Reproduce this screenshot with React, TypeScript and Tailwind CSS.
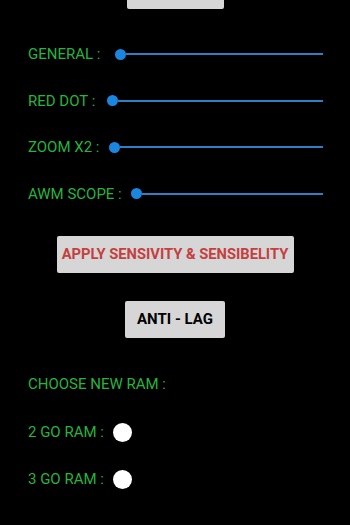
import React from 'react';

const sliders = [
  { label: 'GENERAL :', gap: 'ml-[15px]' },
  { label: 'RED DOT :', gap: 'ml-[12px]' },
  { label: 'ZOOM X2 :', gap: 'ml-[10px]' },
  { label: 'AWM SCOPE :', gap: 'ml-[9px]' },
];

const Slider: React.FC<{ label: string; gap: string }> = ({ label, gap }) => (
  <div className="flex items-center h-[46.5px] pl-[28px] pr-[27px]">
    <span className="text-[15px] text-[#26b43f] whitespace-nowrap">{label}</span>
    <div className={`flex-1 h-[12px] flex items-center ${gap}`}>
      <div className="w-[11px] h-[11px] rounded-full bg-[#1a86e0] shrink-0" />
      <div className="flex-1 h-[2px] bg-[#2f7fc8]" />
    </div>
  </div>
);

const App: React.FC = () => {
  return (
    <div className="w-[350px] h-[525px] bg-black overflow-hidden" style={{ fontFamily: 'Roboto, "Liberation Sans", sans-serif' }}>
      <div className="flex justify-center">
        <div className="w-[97px] h-[9px] bg-[#d6d6d6] rounded-b-[2px]" />
      </div>
      <div className="pt-[22px]">
        {sliders.map(s => <Slider key={s.label} label={s.label} gap={s.gap} />)}
      </div>
      <div className="flex justify-center mt-[19px]">
        <button className="w-[237px] h-[37px] bg-[#d6d6d6] rounded-[2px] text-[14.7px] font-bold text-[#c4403f]">
          APPLY SENSIVITY &amp; SENSIBELITY
        </button>
      </div>
      <div className="flex justify-center mt-[28px]">
        <button className="w-[100px] h-[37px] bg-[#d6d6d6] rounded-[2px] text-[15px] font-bold text-black">
          ANTI - LAG
        </button>
      </div>
      <div className="pl-[28px] mt-[36px] text-[15px] leading-[20px] text-[#26b43f]">CHOOSE NEW RAM :</div>
      <div className="pl-[28px] mt-[28px] flex items-center h-[20px] text-[15px] text-[#26b43f]">
        <span>2 GO RAM :</span>
        <div className="w-[19px] h-[19px] rounded-full bg-white ml-[9px]" />
      </div>
      <div className="pl-[28px] mt-[27px] flex items-center h-[20px] text-[15px] text-[#26b43f]">
        <span>3 GO RAM :</span>
        <div className="w-[19px] h-[19px] rounded-full bg-white ml-[9px]" />
      </div>
    </div>
  );
};

export default App;
